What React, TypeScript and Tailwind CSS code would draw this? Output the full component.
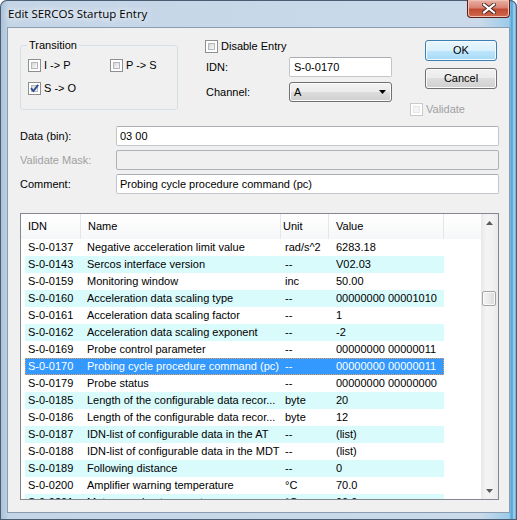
import clsx from "clsx";

const rows: [string, string, string, string][] = [
  ["S-0-0137", "Negative acceleration limit value", "rad/s^2", "6283.18"],
  ["S-0-0143", "Sercos interface version", "--", "V02.03"],
  ["S-0-0159", "Monitoring window", "inc", "50.00"],
  ["S-0-0160", "Acceleration data scaling type", "--", "00000000 00001010"],
  ["S-0-0161", "Acceleration data scaling factor", "--", "1"],
  ["S-0-0162", "Acceleration data scaling exponent", "--", "-2"],
  ["S-0-0169", "Probe control parameter", "--", "00000000 00000011"],
  ["S-0-0170", "Probing cycle procedure command (pc)", "--", "00000000 00000011"],
  ["S-0-0179", "Probe status", "--", "00000000 00000000"],
  ["S-0-0185", "Length of the configurable data recor...", "byte", "20"],
  ["S-0-0186", "Length of the configurable data recor...", "byte", "12"],
  ["S-0-0187", "IDN-list of configurable data in the AT", "--", "(list)"],
  ["S-0-0188", "IDN-list of configurable data in the MDT", "--", "(list)"],
  ["S-0-0189", "Following distance", "--", "0"],
  ["S-0-0200", "Amplifier warning temperature", "°C", "70.0"],
  ["S-0-0201", "Motor warning temperature", "°C", "90.0"],
];

const SELECTED = 7;

function CheckBox({ checked, disabled }: { checked?: boolean; disabled?: boolean }) {
  return (
    <span
      className={clsx(
        "relative flex h-[13px] w-[13px] shrink-0 bg-white p-[2px] border",
        disabled ? "border-[#c9c9c9]" : "border-[#8e8f8f]"
      )}
    >
      <span
        className={clsx(
          "h-full w-full border",
          disabled
            ? "border-[#e6e6e6] bg-[#f4f4f4]"
            : "border-[#b3b7bd] bg-linear-to-br from-[#d6d6d6] to-[#fbfbfb]"
        )}
      />
      {checked && (
        <svg className="absolute left-[-1px] top-[-1px]" width="13" height="13" viewBox="0 0 13 13">
          <path d="M3 6.2 L5.4 9 L10.2 2.8" fill="none" stroke="#2e4c93" strokeWidth="1.9" />
        </svg>
      )}
    </span>
  );
}

function Button({ label, primary }: { label: string; primary?: boolean }) {
  return (
    <div
      className={clsx(
        "flex h-[21px] w-[72px] items-center justify-center rounded-[3px] border text-[11px]",
        primary
          ? "border-[#3c7fb1] bg-[linear-gradient(#eaf6fd_0%,#d9f0fc_50%,#bee6fd_50%,#a7d9f5_100%)] shadow-[inset_0_0_0_1px_#f4fbfe]"
          : "border-[#707070] bg-[linear-gradient(#f2f2f2_0%,#ebebeb_50%,#dddddd_50%,#cfcfcf_100%)] shadow-[inset_0_0_0_1px_#fbfbfb]"
      )}
    >
      {label}
    </div>
  );
}

function TextBox({ value, disabled, className }: { value?: string; disabled?: boolean; className?: string }) {
  return (
    <div
      className={clsx(
        "flex h-[20px] items-center rounded-[2px] border pl-[3px] text-[11px] whitespace-nowrap",
        disabled
          ? "border-[#adb2b5] bg-[#f0f0f0]"
          : "border-[#c3c7cc] border-t-[#abadb3] bg-white",
        className
      )}
    >
      {value}
    </div>
  );
}

export default function App() {
  return (
    <div
      className="relative flex h-[520px] w-[517px] flex-col overflow-hidden rounded-t-[7px] bg-[linear-gradient(to_right,#a8c0d8_0px,#c4d5e7_9px,#cadaea_480px,#9ccbe9_509px,#4f9fd3_512px,#a7d6f0_514px,#4b96cc_517px)] shadow-[inset_0_0_0_1px_#4a5d72]"
      style={{ fontFamily: '"Liberation Sans", Arial, sans-serif' }}
    >
      {/* title bar */}
      <div className="flex h-[27px] shrink-0 items-center pl-[8px]">
        <span
          className="text-[11.5px] leading-[16px] text-black [text-shadow:0_0_6px_#ffffff,0_0_10px_#ffffff]"
          style={{ fontFamily: '"Open Sans", sans-serif' }}
        >
          Edit SERCOS Startup Entry
        </span>
      </div>

      {/* close button */}
      <div className="absolute right-[7px] top-0 flex h-[18px] w-[43px] items-center justify-center rounded-b-[4px] border border-t-0 border-[#5b1f16] bg-[linear-gradient(#eab1a5_0%,#d88373_45%,#c24a34_55%,#cf6a4f_100%)] shadow-[inset_0_0_0_1px_#f0c0b4]">
        <svg width="14" height="11" viewBox="0 0 14 11">
          <path d="M2 1.5 L12 9.5 M12 1.5 L2 9.5" stroke="#4a2420" strokeWidth="4" strokeLinecap="square" />
          <path d="M2 1.5 L12 9.5 M12 1.5 L2 9.5" stroke="#ffffff" strokeWidth="2.2" strokeLinecap="square" />
        </svg>
      </div>

      {/* client area */}
      <div className="mx-[7px] h-[486px] shrink-0 border border-[#8a9cb0] bg-[#f0f0f0] pl-[12px] pr-[10px] pt-[11px] text-[11px] text-black">
        {/* top section */}
        <div className="flex h-[77px]">
          <fieldset className="h-[71px] w-[158px] shrink-0 rounded-[3px] border border-[#d5dfe5]">
            <legend className="ml-[6px] px-[2px] text-[11px] leading-[13px]">Transition</legend>
            <div className="pl-[7px] pt-[7px]">
              <div className="flex h-[13px] items-center">
                <CheckBox />
                <span className="ml-[3px] w-[66px]">I -&gt; P</span>
                <CheckBox />
                <span className="ml-[3px]">P -&gt; S</span>
              </div>
              <div className="mt-[10px] flex h-[13px] items-center">
                <CheckBox checked />
                <span className="ml-[3px]">S -&gt; O</span>
              </div>
            </div>
          </fieldset>

          <div className="ml-[27px] w-[188px] shrink-0">
            <div className="mt-[1px] flex h-[13px] items-center">
              <CheckBox />
              <span className="ml-[3px]">Disable Entry</span>
            </div>
            <div className="mt-[4px] flex items-center">
              <span className="w-[84px] pl-[1px]">IDN:</span>
              <TextBox value="S-0-0170" className="w-[103px] pl-[4px]" />
            </div>
            <div className="mt-[5px] flex items-center">
              <span className="w-[84px] pl-[1px]">Channel:</span>
              <div className="flex h-[20px] w-[103px] items-center justify-between rounded-[3px] border border-[#707070] bg-[linear-gradient(#f2f2f2_0%,#ebebeb_50%,#dddddd_50%,#cfcfcf_100%)] pl-[4px] pr-[5px] shadow-[inset_0_0_0_1px_#fbfbfb]">
                <span>A</span>
                <svg width="7" height="4" viewBox="0 0 7 4">
                  <path d="M0 0 H7 L3.5 4 Z" fill="#000" />
                </svg>
              </div>
            </div>
          </div>

          <div className="ml-[17px] flex w-[87px] shrink-0 flex-col">
            <div className="ml-[15px] mt-[1px]">
              <Button label="OK" primary />
            </div>
            <div className="ml-[15px] mt-[7px]">
              <Button label="Cancel" />
            </div>
            <div className="mt-[14px] flex h-[13px] items-center">
              <CheckBox disabled />
              <span className="ml-[3px] text-[#a0a0a0]">Validate</span>
            </div>
          </div>
        </div>

        {/* data fields */}
        <div className="mt-[10px] flex flex-col gap-[4px]">
          <div className="flex items-center">
            <span className="w-[96px]">Data (bin):</span>
            <TextBox value="03 00" className="flex-1" />
          </div>
          <div className="flex items-center">
            <span className="w-[96px] text-[#a0a0a0]">Validate Mask:</span>
            <TextBox disabled className="flex-1" />
          </div>
          <div className="flex items-center">
            <span className="w-[96px]">Comment:</span>
            <TextBox value="Probing cycle procedure command (pc)" className="flex-1" />
          </div>
        </div>

        {/* list view */}
        <div className="mt-[19px] flex h-[287px] border border-[#828790] bg-white">
          <div className="flex w-[460px] flex-col">
            <div className="flex h-[25px] shrink-0 items-center bg-linear-to-b from-white to-[#f6f7f8]">
              <div className="flex h-full w-[60px] items-center border-r border-[#e3e6ea] pl-[7px]">IDN</div>
              <div className="flex h-full w-[200px] items-center border-r border-[#e3e6ea] pl-[7px]">Name</div>
              <div className="flex h-full w-[48px] items-center border-r border-[#e3e6ea] pl-[2px]">Unit</div>
              <div className="flex h-full w-[115px] items-center border-r border-[#e3e6ea] pl-[7px]">Value</div>
              <div className="h-full flex-1" />
            </div>
            <div className="flex-1 overflow-hidden pl-[4px]">
              {rows.map(([idn, name, unit, value], i) => (
                <div
                  key={idn}
                  className={clsx(
                    "flex h-[17px] w-[419px] items-center whitespace-nowrap leading-[17px]",
                    i === SELECTED
                      ? "bg-[#3399ff] text-white outline outline-1 outline-dotted outline-offset-[-1px] outline-[#e8a060]"
                      : i % 2 === 1
                        ? "bg-[#d9fbfc]"
                        : "bg-white"
                  )}
                >
                  <span className="w-[56px] shrink-0 pl-[3px]">{idn}</span>
                  <span className="w-[200px] shrink-0 overflow-hidden pl-[6px]">{name}</span>
                  <span className="w-[48px] shrink-0 pl-[4px]">{unit}</span>
                  <span className="w-[115px] shrink-0 pl-[7px]">{value}</span>
                </div>
              ))}
            </div>
          </div>

          {/* scrollbar */}
          <div className="flex w-[17px] flex-col bg-[linear-gradient(to_right,#e8e8e8,#f4f4f4_30%,#f1f1f1_70%,#e9e9e9)]">
            <div className="flex h-[17px] shrink-0 items-center justify-center">
              <svg width="7" height="4" viewBox="0 0 7 4">
                <path d="M0 4 H7 L3.5 0 Z" fill="#5a5a5a" />
              </svg>
            </div>
            <div className="flex-1">
              <div className="ml-[1px] mt-[60px] h-[15px] w-[14px] rounded-[2px] border border-[#a3a3a3] bg-[linear-gradient(to_right,#f4f4f4,#e9e9e9_50%,#dadada)] shadow-[inset_0_0_0_1px_#fafafa]" />
            </div>
            <div className="flex h-[17px] shrink-0 items-center justify-center">
              <svg width="7" height="4" viewBox="0 0 7 4">
                <path d="M0 0 H7 L3.5 4 Z" fill="#5a5a5a" />
              </svg>
            </div>
          </div>
        </div>
      </div>
    </div>
  );
}
